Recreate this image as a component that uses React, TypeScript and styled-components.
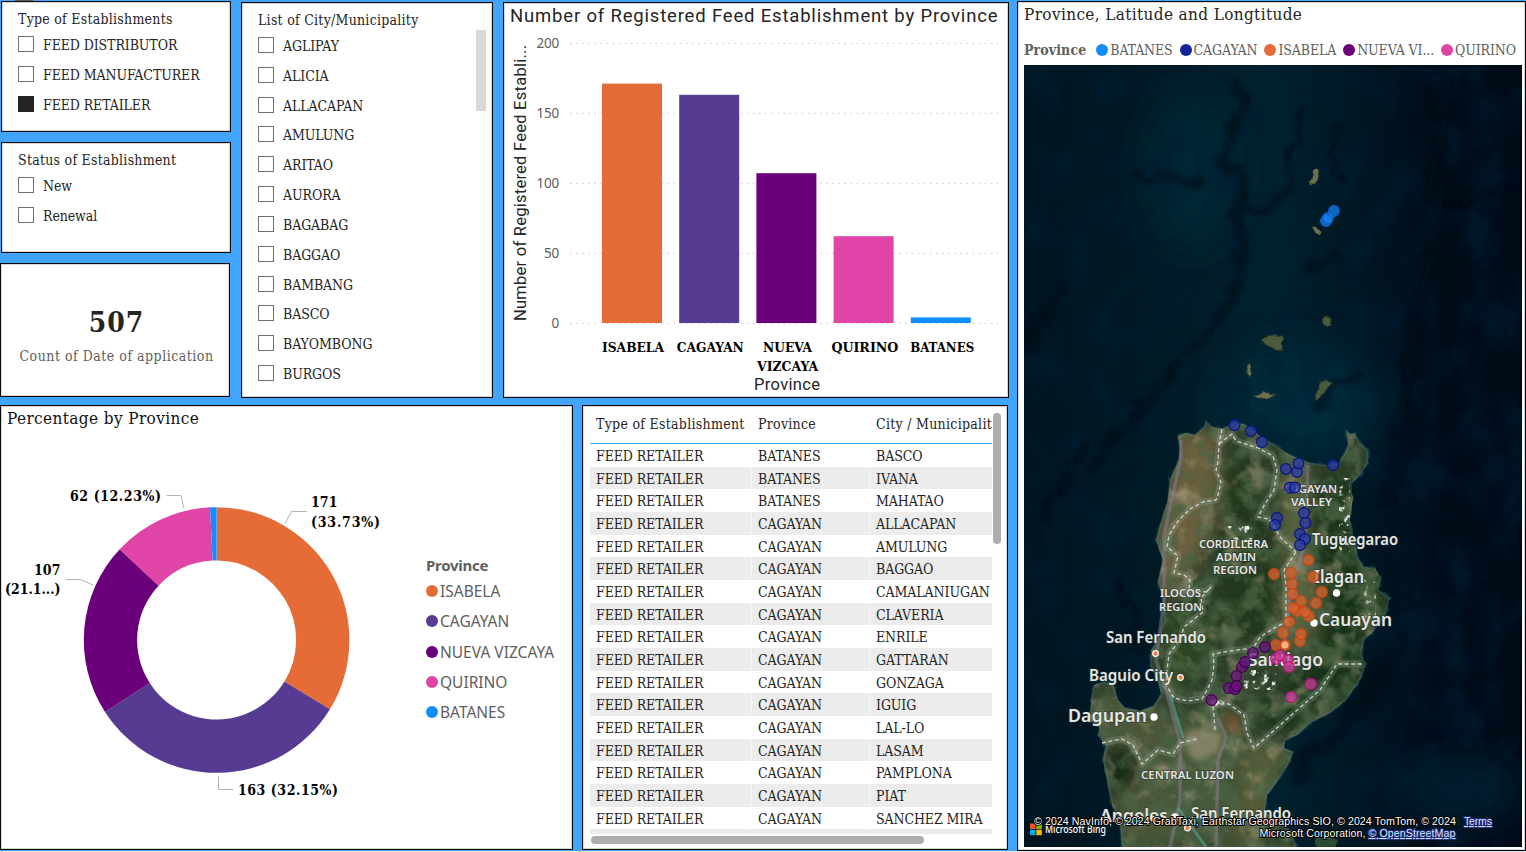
import React from "react";
import styled, { createGlobalStyle } from "styled-components";

const serif = `"DejaVu Serif Condensed", "DejaVu Serif", "Liberation Serif", serif`;
const sans = `"Noto Sans", "Open Sans", sans-serif`;
const din = `Roboto, "Noto Sans", sans-serif`;

const colors = {
  orange: "#e66c37",
  violet: "#573b92",
  purple: "#6b007b",
  pink: "#e044a7",
  azure: "#118dff",
  navy: "#12239e",
};

const GlobalStyle = createGlobalStyle`
  * { box-sizing: border-box; }
  body { margin: 0; background: #41a4ff; overflow: hidden; }
`;

const Page = styled.main`
  display: flex;
  width: 1526px;
  height: 852px;
  padding-top: 1px;
  background: linear-gradient(#5f5a52, #5f5a52) 15px 0 / 18px 1px no-repeat #41a4ff;
  border-bottom: 1px solid #d9e6ee;
  color: #252423;
  font-family: ${serif};
`;

const Reports = styled.div`
  display: flex;
  flex-direction: column;
  width: 1017px;
`;

const TopRow = styled.div`
  display: flex;
  height: 404px;
`;

const BottomRow = styled.div`
  display: flex;
  gap: 9px;
  height: 446px;
`;

const Panel = styled.section<{ $w: number; $h: number }>`
  flex: none;
  width: ${(p) => p.$w}px;
  height: ${(p) => p.$h}px;
  background: #fff;
  border: 1px solid #0b0b0b;
  box-shadow: inset 0 0 0 1px #d6d6d6;
  overflow: hidden;
`;

const FilterColumn = styled.div`
  display: flex;
  flex-direction: column;
  gap: 10px;
  width: 241px;
  padding-left: 1px;
`;

const Slicer = styled(Panel)`
  padding: 8px 0 0 16px;
`;

const SlicerTitle = styled.h2`
  margin: 0;
  height: 19px;
  font-size: 14px;
  font-weight: 400;
  line-height: 19px;
  letter-spacing: 0.25px;
  white-space: nowrap;
`;

const Options = styled.ul<{ $pitch: number; $top: number }>`
  display: grid;
  grid-auto-rows: ${(p) => p.$pitch}px;
  margin: 0;
  padding: ${(p) => p.$top}px 0 0;
  list-style: none;
`;

const Option = styled.li`
  display: flex;
  align-items: flex-start;
  gap: 9px;
  font-size: 14px;
  line-height: 18px;
  letter-spacing: -0.1px;
  white-space: nowrap;
`;

const Check = styled.span<{ $on?: boolean }>`
  flex: none;
  width: 16px;
  height: 16px;
  border: 1px solid ${(p) => (p.$on ? "#252423" : "#6f6f6f")};
  background: ${(p) => (p.$on ? "#252423" : "#fff")};
`;

const CountCard = styled(Panel)`
  display: flex;
  flex-direction: column;
  align-items: center;
  margin-left: -1px;
  padding: 40px 0 0 3px;
`;

const CountValue = styled.strong`
  font-size: 28px;
  line-height: 38px;
  letter-spacing: 1px;
`;

const CountLabel = styled.span`
  margin-top: 4px;
  color: #605e5c;
  font-size: 14px;
  line-height: 20px;
  letter-spacing: 0.5px;
  white-space: nowrap;
`;

const CityPanel = styled(Panel)`
  display: flex;
  justify-content: space-between;
  margin: 1px 10px 0 0;
  padding: 8px 6px 0 16px;
`;

const CityThumb = styled.div`
  width: 10px;
  height: 81px;
  margin-top: 19px;
  background: #d9d9d9;
`;

const ChartPanel = styled(Panel)`
  margin-top: 1px;
`;

const ChartTitle = styled.h2`
  margin: 1px 0 0 6px;
  height: 24px;
  font: 400 18.5px/24px ${din};
  letter-spacing: 0.82px;
  white-space: nowrap;
`;

const PieTitle = styled.h2`
  margin: 1px 0 0 6px;
  height: 22px;
  font-size: 17px;
  font-weight: 400;
  line-height: 23px;
  letter-spacing: 0.4px;
  color: #111;
  white-space: nowrap;
`;

const PieBody = styled.div`
  display: flex;
`;

const Legend = styled.div`
  padding: 124px 0 0 25px;
  color: #605e5c;
  font-family: ${sans};
`;

const LegendTitle = styled.div`
  height: 23px;
  font-size: 15px;
  font-weight: 700;
  line-height: 24px;
  letter-spacing: -0.25px;
`;

const LegendRow = styled.div`
  display: flex;
  align-items: center;
  gap: 2px;
  height: 30.25px;
  font-size: 15.5px;
  letter-spacing: 0;
  white-space: nowrap;
`;

const Dot = styled.span<{ $c: string }>`
  flex: none;
  width: 12px;
  height: 12px;
  border-radius: 50%;
  background: ${(p) => p.$c};
`;

const TablePanel = styled(Panel)`
  padding: 6px 5px 0 7px;
`;

const TableTop = styled.div`
  display: flex;
  gap: 1px;
`;

const TableView = styled.div`
  width: 402px;
  height: 422px;
  overflow: hidden;
`;

const TableRow = styled.div<{ $alt?: boolean }>`
  display: grid;
  grid-template-columns: 162px 118px 150px;
  width: 430px;
  height: 22.67px;
  background: ${(p) => (p.$alt ? "#ececec" : "#fff")};
  font-size: 14px;
  line-height: 24px;
  letter-spacing: -0.1px;
`;

const TableHead = styled(TableRow)`
  height: 32px;
  border-bottom: 1px solid #41a4ff;
  line-height: 25px;
  letter-spacing: 0.28px;
`;

const Cell = styled.span`
  padding-left: 6px;
  border-right: 1px solid rgba(255, 255, 255, 0.45);
  white-space: nowrap;
`;

const VThumb = styled.div`
  width: 8px;
  height: 131px;
  margin-top: 1px;
  border-radius: 4px;
  background: #b0aeac;
`;

const HThumb = styled.div`
  width: 333px;
  height: 8px;
  margin: 2px 0 0 1px;
  border-radius: 4px;
  background: #b0aeac;
`;

const MapPanel = styled(Panel)`
  padding: 0 0 0 6px;
`;

const MapTitle = styled.h2`
  margin: 0;
  height: 24px;
  font-size: 17px;
  font-weight: 400;
  line-height: 25px;
  letter-spacing: 0.37px;
  white-space: nowrap;
`;

const MapLegend = styled.div`
  display: flex;
  align-items: center;
  gap: 7px;
  height: 39px;
  padding-top: 8px;
  color: #605e5c;
  font-size: 14px;
  letter-spacing: -0.12px;
  white-space: nowrap;
`;

const MapLegendName = styled.b`
  margin-right: 3px;
  letter-spacing: 0.1px;
`;

const MapLegendItem = styled.span`
  display: flex;
  align-items: center;
  gap: 2px;
`;

const Drawing = styled.svg`
  display: block;
  flex: none;
`;

const establishmentTypes = ["FEED DISTRIBUTOR", "FEED MANUFACTURER", "FEED RETAILER"];
const statuses = ["New", "Renewal"];
const cities = [
  "AGLIPAY", "ALICIA", "ALLACAPAN", "AMULUNG", "ARITAO", "AURORA",
  "BAGABAG", "BAGGAO", "BAMBANG", "BASCO", "BAYOMBONG", "BURGOS",
];
const tableRows = [
  ["BATANES", "BASCO"], ["BATANES", "IVANA"], ["BATANES", "MAHATAO"],
  ["CAGAYAN", "ALLACAPAN"], ["CAGAYAN", "AMULUNG"], ["CAGAYAN", "BAGGAO"],
  ["CAGAYAN", "CAMALANIUGAN"], ["CAGAYAN", "CLAVERIA"], ["CAGAYAN", "ENRILE"],
  ["CAGAYAN", "GATTARAN"], ["CAGAYAN", "GONZAGA"], ["CAGAYAN", "IGUIG"],
  ["CAGAYAN", "LAL-LO"], ["CAGAYAN", "LASAM"], ["CAGAYAN", "PAMPLONA"],
  ["CAGAYAN", "PIAT"], ["CAGAYAN", "SANCHEZ MIRA"],
];

function CheckList({ items, checked, pitch = 30, top = 7 }: { items: string[]; checked?: string; pitch?: number; top?: number }) {
  return (
    <Options $pitch={pitch} $top={top}>
      {items.map((item) => (
        <Option key={item}>
          <Check $on={item === checked} />
          {item}
        </Option>
      ))}
    </Options>
  );
}

const bars = [
  { lines: ["ISABELA"], value: 171, color: colors.orange, w: [62] },
  { lines: ["CAGAYAN"], value: 163, color: colors.violet, w: [67] },
  { lines: ["NUEVA", "VIZCAYA"], value: 107, color: colors.purple, w: [49, 61] },
  { lines: ["QUIRINO"], value: 62, color: colors.pink, w: [67] },
  { lines: ["BATANES"], value: 4, color: colors.azure, w: [64] },
];

function BarChart() {
  return (
    <Drawing width="504" height="368" viewBox="504 28 504 368">
      {[0, 50, 100, 150, 200].map((v) => {
        const y = 323.3 - v * 1.4;
        return (
          <g key={v}>
            <line x1="570" x2="1002" y1={y} y2={y} stroke="#c8c8c8" strokeDasharray="1.5 4.6" />
            <text x="559" y={y + 5} textAnchor="end" fontSize="13.5" fill="#605e5c" fontFamily={sans} letterSpacing="-0.2">{v}</text>
          </g>
        );
      })}
      {bars.map((b, i) => (
        <g key={b.color}>
          <rect x={602 + i * 77.2} y={323 - b.value * 1.4} width="60" height={b.value * 1.4} fill={b.color} />
          {b.lines.map((line, n) => (
            <text key={line} x={633 + i * 77.3} y={352 + n * 19} textAnchor="middle" fontSize="13.5" fontWeight="700" fill="#000" fontFamily={serif} textLength={b.w[n]} lengthAdjust="spacingAndGlyphs">{line}</text>
          ))}
        </g>
      ))}
      <text x="787" y="390" textAnchor="middle" fontSize="16.5" fill="#252423" fontFamily={din} textLength="66">Province</text>
      <text transform="translate(526 321) rotate(-90)" fontSize="16.5" fill="#252423" fontFamily={din} textLength="276">Number of Registered Feed Establi...</text>
    </Drawing>
  );
}

const slices = [
  { value: 171, color: colors.orange },
  { value: 163, color: colors.violet },
  { value: 107, color: colors.purple },
  { value: 62, color: colors.pink },
  { value: 4, color: colors.azure },
];

function Donut() {
  const at = (r: number, t: number) => `${216.6 + r * Math.sin(t)} ${640 - r * Math.cos(t)}`;
  let sum = 0;
  const label = { fontSize: 14, fontWeight: 700, fill: "#000", fontFamily: serif } as const;
  return (
    <Drawing width="400" height="417" viewBox="1 429 400 417">
      {slices.map((s) => {
        const a = (sum / 507) * Math.PI * 2;
        sum += s.value;
        const b = (sum / 507) * Math.PI * 2;
        const big = b - a > Math.PI ? 1 : 0;
        return (
          <path key={s.color} fill={s.color} d={`M${at(132.8, a)}A132.8 132.8 0 ${big} 1 ${at(132.8, b)}L${at(79.5, b)}A79.5 79.5 0 ${big} 0 ${at(79.5, a)}Z`} />
        );
      })}
      <g fill="none" stroke="#b3b3b3">
        <path d="M285 523.5L291.500 511.500H307" />
        <path d="M166.500 495.500H181L184 508.500" />
        <path d="M66 579.500H80.500L93 585" />
        <path d="M218.500 776V789.500H233" />
      </g>
      <text x="311" y="507" {...label} textLength="26.500">171</text>
      <text x="311" y="527" {...label} textLength="69">(33.73%)</text>
      <text x="70" y="501" {...label} textLength="91">62 (12.23%)</text>
      <text x="34" y="575" {...label} textLength="26.500">107</text>
      <text x="5" y="594" {...label} textLength="55.500">(21.1...)</text>
      <text x="238" y="795" {...label} textLength="100">163 (32.15%)</text>
    </Drawing>
  );
}

const land =
  "M1178 436L1186 433L1195 435L1204 427L1206 421L1212 427L1222 429L1234 423L1244 424L1256 433L1276 446L1290 455L1307 462L1325 465L1338 463L1345 453L1348 445L1346 430L1350 434L1355 433L1360 443L1368 450L1368 463L1360 475L1350 485L1353 497L1350 520L1354 540L1358 558L1364 567L1375 568L1381 578L1378 590L1390 598L1386 612L1381 622L1372 633L1364 639L1361 655L1366 663L1360 680L1346 700L1330 713L1310 723L1297 735L1285 740L1284 748L1293 752L1288 765L1278 780L1267 795L1265 810L1275 822L1290 830L1297 848H1122L1120 822L1112 805L1106 775L1103 760L1106 745L1098 735L1100 728L1090 720L1091 700L1094 685L1104 682L1113 684L1118 700L1125 708L1140 711L1154 706L1161 694L1158 680L1150 665L1151 650L1158 640L1164 620L1164 600L1158 582L1163 560L1156 540L1160 525L1168 500L1170 480L1179 460L1180 447Z";

const borders = [
  "M1222 429L1219 444L1218 462L1216 470L1221 482L1218 495L1216 500L1203 502L1190 509L1178 521L1169 535L1167 547L1178 556L1174 573L1184 575L1190 580L1189 590L1206 592L1211 587L1201 598L1203 612L1193 620L1184 627L1180 640L1169 654L1167 670L1166 685L1174 698L1188 701L1202 699L1207 690L1212 680L1214 665L1213 654L1230 651L1253 648L1260 637L1276 627L1286 622L1286 585L1284 570L1296 552",
  "M1219 444L1232 434L1236 441L1258 448L1273 456L1277 470L1274 490L1265 504L1258 517L1269 519L1281 538L1296 552",
  "M1102 743L1122 739L1133 745L1142 764L1158 750L1173 754L1180 743L1197 739",
  "M1212 700L1214 716L1215 730",
  "M1214 704L1229 704L1244 715L1247 733L1254 748L1320 690L1337 664H1362",
];

const markers: { color: string; edge: string; points: number[][] }[] = [
  { color: "#1683f5", edge: "#0b62d0", points: [[1334, 211], [1326, 221], [1328, 218]] },
  { color: "#2638a8", edge: "#08127e", points: [[1234.5, 425], [1251, 431], [1262, 442], [1286, 469], [1297, 472], [1298.5, 463.5], [1333, 465], [1290, 487.5], [1295, 487.5], [1277, 518], [1275, 525], [1304, 513], [1305.5, 523], [1300, 534], [1305, 539], [1300, 545]] },
  { color: "#df632e", edge: "#c64716", points: [[1308.5, 560], [1274, 574], [1291, 573], [1313, 577], [1292, 584], [1322, 592], [1292.5, 594], [1301, 601], [1316, 603], [1297, 611], [1293, 608], [1309, 616], [1305, 612], [1289, 622], [1283, 633], [1300, 641], [1301, 634], [1276, 645], [1285, 645]] },
  { color: "#69107d", edge: "#420052", points: [[1265, 647], [1253, 653], [1242, 667], [1245, 662], [1236.5, 676], [1229, 688], [1235, 689], [1236.5, 686], [1211.5, 700]] },
  { color: "#d13d9c", edge: "#b5147f", points: [[1276, 659], [1280, 655.5], [1288, 660], [1289, 667], [1311, 684], [1291, 697]] },
];

const places: [string, number, number, number, number][] = [
  ["CAGAYAN", 1284, 493, 53, 11.5], ["VALLEY", 1291, 506, 41, 11.5],
  ["CORDILLERA", 1199, 547.500, 69, 11.5], ["ADMIN", 1216, 560.500, 40, 11.5], ["REGION", 1213, 574, 44, 11.5],
  ["ILOCOS", 1160, 597, 41, 11.5], ["REGION", 1159, 611, 43, 11.5],
  ["Tuguegarao", 1312, 545, 86, 15.5], ["Ilagan", 1314, 583, 50, 17], ["Cauayan", 1319, 626, 73, 17],
  ["San Fernando", 1106, 643, 100, 15.5], ["Baguio City", 1089, 681, 84, 15.5],
  ["Santiago", 1248, 666, 75, 17], ["Dagupan", 1068, 722, 79, 17.5],
  ["CENTRAL LUZON", 1141, 779, 93, 11.5], ["Angeles", 1100, 822, 68, 17], ["San Fernando", 1191, 819, 100, 15.5],
];

function SatelliteMap() {
  const credit = { fontSize: 10.7, fill: "#fff", fontFamily: `"Liberation Sans", Arial, sans-serif`, stroke: "#000", strokeWidth: 2, paintOrder: "stroke" } as const;
  return (
    <Drawing width="498" height="782" viewBox="1024 65 498 782">
      <defs>
        <linearGradient id="sea" x1="0" x2="1">
          <stop offset="0" stopColor="#00141f" />
          <stop offset="0.2" stopColor="#011822" />
          <stop offset="0.5" stopColor="#02222e" />
          <stop offset="0.66" stopColor="#011723" />
          <stop offset="0.84" stopColor="#000b18" />
          <stop offset="1" stopColor="#000b17" />
        </linearGradient>
        <clipPath id="coast"><path d={land} /></clipPath>
        <filter id="ridges" x="0" y="0" width="100%" height="100%">
          <feTurbulence type="fractalNoise" baseFrequency="0.032 0.02" numOctaves="5" seed="8" />
          <feColorMatrix values="0 0 0 0 0  0 0 0 0 0.012  0 0 0 0 0.03  2.6 0 0 0 -1.05" />
        </filter>
        <filter id="grain" x="0" y="0" width="100%" height="100%">
          <feTurbulence type="fractalNoise" baseFrequency="0.05" numOctaves="5" seed="21" />
          <feColorMatrix values="0 0 0 0 0.07  0 0 0 0 0.13  0 0 0 0 0.06  3.4 0 0 0 -1.4" />
        </filter>
        <filter id="soil" x="0" y="0" width="100%" height="100%">
          <feTurbulence type="fractalNoise" baseFrequency="0.045" numOctaves="5" seed="4" />
          <feColorMatrix values="0 0 0 0 0.48  0 0 0 0 0.42  0 0 0 0 0.27  0 3.4 0 0 -1.7" />
        </filter>
        <filter id="clouds" x="0" y="0" width="100%" height="100%">
          <feTurbulence type="fractalNoise" baseFrequency="0.16" numOctaves="3" seed="13" />
          <feColorMatrix values="0 0 0 0 0.8  0 0 0 0 0.85  0 0 0 0 0.8  7 0 0 0 -3.9" />
        </filter>
        <filter id="soft8"><feGaussianBlur stdDeviation="8" /></filter>
        <filter id="soft20" x="-50%" y="-50%" width="200%" height="200%"><feGaussianBlur stdDeviation="20" /></filter>
        <filter id="soft3"><feGaussianBlur stdDeviation="3" /></filter>
        <filter id="trench" x="-5%" y="-5%" width="110%" height="110%">
          <feTurbulence type="fractalNoise" baseFrequency="0.035" numOctaves="4" seed="5" />
          <feDisplacementMap in="SourceGraphic" scale="34" xChannelSelector="R" yChannelSelector="G" />
          <feGaussianBlur stdDeviation="2" />
        </filter>
        <filter id="rough" x="-5%" y="-5%" width="110%" height="110%">
          <feTurbulence type="fractalNoise" baseFrequency="0.12" numOctaves="2" seed="3" />
          <feDisplacementMap in="SourceGraphic" scale="5" xChannelSelector="R" yChannelSelector="G" />
        </filter>
      </defs>
      <rect x="1024" y="65" width="498" height="782" fill="url(#sea)" />
      <g filter="url(#soft20)">
        <ellipse cx="1300" cy="405" rx="80" ry="60" fill="#03293a" />
        <ellipse cx="1190" cy="170" rx="45" ry="80" fill="#032736" />
        <ellipse cx="1460" cy="790" rx="60" ry="30" fill="#022232" />
      </g>
      <rect x="1024" y="65" width="498" height="782" filter="url(#ridges)" opacity="0.7" />
      <g fill="none" stroke="#000712" strokeLinecap="round" strokeLinejoin="round" filter="url(#trench)" opacity="0.65">
        <path d="M1024 350L1062 290M1094 465L1140 410L1190 355L1235 290L1244 200L1226 160L1240 90" strokeWidth="9" />
        <path d="M1437 65L1441 130L1433 240L1412 330L1404 450L1385 500" strokeWidth="11" />
        <path d="M1380 670L1365 705L1315 750L1298 775" strokeWidth="15" />
        <path d="M1315 405L1362 370M1330 130L1335 180M1128 178L1195 178M1040 520L1085 450M1128 590L1138 650" strokeWidth="6" />
        <path d="M1300 110L1290 190L1250 215M1480 190L1450 210L1520 175M1300 265L1340 260" strokeWidth="5" />
      </g>

      <g filter="url(#rough)">
        <path d={land} fill="#2f3f29" stroke="#0a3a42" strokeWidth="2" />
      </g>
      <g clipPath="url(#coast)">
        <g filter="url(#soft8)">
          <path d="M1178 430L1218 432L1220 500L1200 560L1165 600L1150 570Z" fill="#6a5f3c" />
          <path d="M1225 450L1268 465L1262 520L1282 550L1275 640L1220 640L1215 520Z" fill="#24381e" />
          <path d="M1280 460L1308 470L1302 550L1322 600L1305 650L1280 640L1285 560Z" fill="#60653c" />
          <path d="M1318 480L1352 480L1352 560L1385 590L1350 680L1290 730L1255 720L1325 650Z" fill="#173016" />
          <path d="M1168 610L1210 600L1215 650L1180 690L1160 680Z" fill="#2b4420" />
          <path d="M1095 690L1170 710L1160 845L1122 845Z" fill="#4c5538" />
          <path d="M1165 720L1240 710L1225 845H1160Z" fill="#46583a" />
          <path d="M1242 740L1288 745L1260 845H1230Z" fill="#555b39" />
          <ellipse cx="1121" cy="768" rx="17" ry="25" fill="#172b15" />
        </g>
        <rect x="1085" y="415" width="310" height="435" filter="url(#soil)" opacity="0.5" />
        <rect x="1085" y="415" width="310" height="435" filter="url(#grain)" opacity="0.75" />
        <path d="M1185 732L1200 728L1222 732L1220 752L1196 762L1186 750Z" fill="#a09678" opacity="0.65" filter="url(#soft3)" />
        <path d="M1222 710L1240 715L1243 735L1226 732Z" fill="#7b4f2c" opacity="0.6" filter="url(#soft3)" />
        <rect x="1339" y="478" width="11" height="76" filter="url(#clouds)" />
        <rect x="1228" y="526" width="24" height="16" filter="url(#clouds)" />
        <rect x="1243" y="670" width="33" height="20" filter="url(#clouds)" />
        <rect x="1364" y="580" width="12" height="40" filter="url(#clouds)" opacity="0.6" />
        <rect x="1214" y="697" width="12" height="10" filter="url(#clouds)" />
        <path d={land} fill="none" stroke="#8b8580" strokeWidth="3" opacity="0.25" />
      </g>

      <g fill="#68704f" stroke="#222f25" filter="url(#rough)">
        <path d="M1309 185L1313 171L1317 168L1320 174L1315 185Z" />
        <path d="M1311 228L1315 226L1322 231L1320 236L1315 233Z" />
        <path d="M1261 340L1268 335L1283 337L1282 352L1272 348Z" fill="#4b5a3c" />
        <path d="M1247 365L1249 361L1252 370L1251 379L1247 373Z" />
        <path d="M1252 396L1263 392L1276 394L1265 399Z" />
        <path d="M1315 397L1320 383L1327 379L1332 384L1322 395L1317 402Z" fill="#4b5a3c" />
        <circle cx="1327" cy="321" r="5" fill="#4b5a3c" />
        <path d="M1313 838L1325 832L1338 840L1334 847H1318Z" fill="#2e4930" />
      </g>

      <g fill="none" strokeLinejoin="round">
        <path d="M1181 440L1181 458L1164 535L1164 600L1156 660L1166 690L1180 742L1180 800L1170 847M1218 718L1226 737L1218 760L1216 847M1308 465L1305 540L1290 600L1284 650" stroke="#8b7c91" strokeWidth="3.500" opacity="0.5" />
        <path d="M1170 695L1183 738M1178 808L1206 847" stroke="#55a58e" strokeWidth="3" opacity="0.6" />
        {borders.map((d) => (
          <g key={d}>
            <path d={d} stroke="#b6bcb4" strokeWidth="7" opacity="0.2" />
            <path d={d} stroke="#e3e5dd" strokeWidth="1.300" strokeDasharray="4 2.500" opacity="0.85" />
          </g>
        ))}
      </g>

      {places.map(([name, x, y, w, size]) => (
        <text key={`${name}${y}`} x={x} y={y} textLength={w} lengthAdjust="spacingAndGlyphs" fontSize={size} fontWeight="600" fontFamily={sans} fill="#e5e6e3" stroke="#26302b" strokeWidth="1.300" strokeOpacity="0.65" paintOrder="stroke">{name}</text>
      ))}
      {[[1314, 623], [1336.5, 593], [1154, 717], [1175, 817]].map(([x, y]) => (
        <circle key={x} cx={x} cy={y} r="3.700" fill="#fff" />
      ))}
      {[[1155.5, 653.5], [1180.5, 677.5], [1187.5, 828]].map(([x, y]) => (
        <circle key={x} cx={x} cy={y} r="2.800" fill="#f07c42" stroke="#fff" strokeWidth="1.200" />
      ))}

      {markers.map((m) =>
        m.points.map(([x, y], i) => (
          <circle key={`${m.color}${i}`} cx={x} cy={y} r="5.400" fill={m.color} fillOpacity="0.72" stroke={m.edge} strokeWidth="1.100" />
        ))
      )}
      <circle cx="1285" cy="645" r="3.500" fill="#ffaf7c" />

      <g>
        <rect x="1030" y="823.500" width="5.500" height="5.500" fill="#f25022" />
        <rect x="1036.300" y="823.500" width="5.500" height="5.500" fill="#7fba00" />
        <rect x="1030" y="829.700" width="5.500" height="5.500" fill="#00a4ef" />
        <rect x="1036.300" y="829.700" width="5.500" height="5.500" fill="#ffb900" />
        <text x="1045" y="833" fontSize="10" fontWeight="500" fill="#fff" fontFamily={sans} textLength="61" lengthAdjust="spacingAndGlyphs">Microsoft Bing</text>
      </g>
      <text x="1034" y="825" {...credit} textLength="422">© 2024 NavInfo, © 2024 GrabTaxi, Earthstar Geographics SIO, © 2024 TomTom, © 2024</text>
      <text x="1259.500" y="837" {...credit} textLength="106">Microsoft Corporation,</text>
      <g {...credit} fill="#d9e0ff" stroke="#1b2d79">
        <text x="1368.500" y="837" textLength="87" textDecoration="underline">© OpenStreetMap</text>
        <text x="1464" y="825" textLength="28" textDecoration="underline">Terms</text>
      </g>
    </Drawing>
  );
}

const mapLegend: [string, string][] = [
  ["BATANES", colors.azure],
  ["CAGAYAN", colors.navy],
  ["ISABELA", colors.orange],
  ["NUEVA VI...", colors.purple],
  ["QUIRINO", colors.pink],
];

export default function App() {
  return (
    <>
      <GlobalStyle />
      <Page>
        <Reports>
          <TopRow>
            <FilterColumn>
              <Slicer $w={230} $h={131}>
                <SlicerTitle>Type of Establishments</SlicerTitle>
                <CheckList items={establishmentTypes} checked="FEED RETAILER" />
              </Slicer>
              <Slicer $w={230} $h={111}>
                <SlicerTitle>Status of Establishment</SlicerTitle>
                <CheckList items={statuses} />
              </Slicer>
              <CountCard $w={230} $h={134}>
                <CountValue>507</CountValue>
                <CountLabel>Count of Date of application</CountLabel>
              </CountCard>
            </FilterColumn>
            <CityPanel $w={252} $h={396}>
              <div>
                <SlicerTitle>List of City/Municipality</SlicerTitle>
                <CheckList items={cities} pitch={29.84} />
              </div>
              <CityThumb />
            </CityPanel>
            <ChartPanel $w={506} $h={396}>
              <ChartTitle>Number of Registered Feed Establishment by Province</ChartTitle>
              <BarChart />
            </ChartPanel>
          </TopRow>
          <BottomRow>
            <Panel $w={573} $h={445}>
              <PieTitle>Percentage by Province</PieTitle>
              <PieBody>
                <Donut />
                <Legend>
                  <LegendTitle>Province</LegendTitle>
                  {bars.map((b) => (
                    <LegendRow key={b.color}>
                      <Dot $c={b.color} />
                      {b.lines.join(" ")}
                    </LegendRow>
                  ))}
                </Legend>
              </PieBody>
            </Panel>
            <TablePanel $w={426} $h={445}>
              <TableTop>
                <TableView>
                  <TableHead>
                    <Cell>Type of Establishment</Cell>
                    <Cell>Province</Cell>
                    <Cell>City / Municipality</Cell>
                  </TableHead>
                  {tableRows.map(([province, city], i) => (
                    <TableRow key={city} $alt={i % 2 === 1}>
                      <Cell>FEED RETAILER</Cell>
                      <Cell>{province}</Cell>
                      <Cell>{city}</Cell>
                    </TableRow>
                  ))}
                  <TableRow $alt />
                </TableView>
                <VThumb />
              </TableTop>
              <HThumb />
            </TablePanel>
          </BottomRow>
        </Reports>
        <MapPanel $w={509} $h={850}>
          <MapTitle>Province, Latitude and Longtitude</MapTitle>
          <MapLegend>
            <MapLegendName>Province</MapLegendName>
            {mapLegend.map(([name, color]) => (
              <MapLegendItem key={name}>
                <Dot $c={color} />
                {name}
              </MapLegendItem>
            ))}
          </MapLegend>
          <SatelliteMap />
        </MapPanel>
      </Page>
    </>
  );
}
